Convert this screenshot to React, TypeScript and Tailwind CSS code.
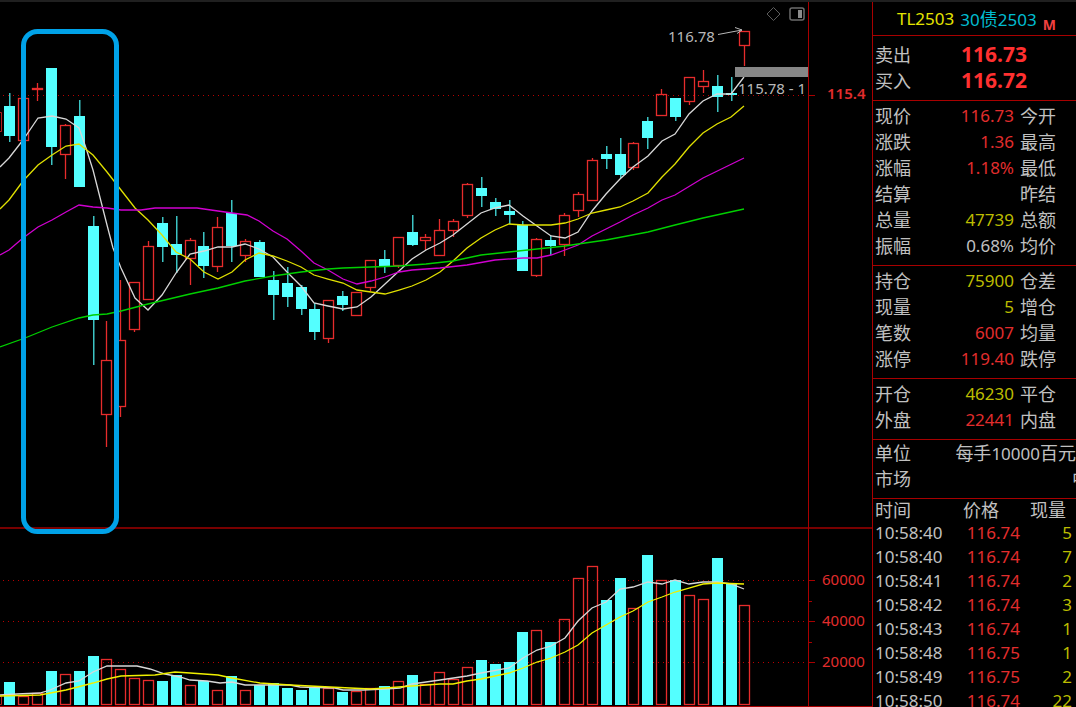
type Candle = [
	kind: "up" | "down",
	high: number,
	top: number,
	bottom: number,
	low: number,
	volume: number
];

type Tone = "red" | "yellow" | "gray";

type Quote = {
	label: string;
	value: string;
	tone: Tone;
	next: string;
};

const FIRST_X = 9.8;
const STEP = 13.87;

// one entry per day, every number is a y coordinate on the canvas
const candles: Candle[] = [
	["down", 93, 106, 136, 142, 682],
	["up", 98, 98, 140, 140, 696],
	["up", 83, 88, 89, 101, 693],
	["down", 68, 68, 147, 165, 671],
	["up", 124, 125, 154, 179, 674],
	["down", 100, 116, 187, 187, 671],
	["down", 216, 226, 320, 365, 656],
	["up", 321, 360, 414, 447, 659],
	["up", 280, 340, 406, 417, 669],
	["up", 282, 282, 329, 332, 678],
	["up", 241, 246, 299, 299, 680],
	["down", 217, 223, 247, 262, 681],
	["down", 216, 244, 255, 273, 675],
	["up", 238, 240, 258, 285, 685],
	["down", 232, 246, 266, 278, 681],
	["up", 217, 227, 266, 272, 690],
	["down", 200, 213, 246, 262, 676],
	["up", 239, 241, 255, 262, 690],
	["down", 240, 242, 277, 277, 685],
	["down", 271, 280, 295, 320, 683],
	["down", 267, 283, 297, 307, 688],
	["down", 285, 287, 309, 315, 690],
	["down", 303, 309, 332, 340, 688],
	["up", 300, 300, 338, 343, 688],
	["down", 291, 296, 305, 311, 692],
	["up", 292, 292, 315, 315, 691],
	["up", 260, 260, 287, 291, 688],
	["down", 250, 259, 267, 273, 686],
	["up", 237, 237, 265, 268, 681],
	["down", 215, 232, 245, 246, 675],
	["up", 234, 237, 240, 250, 684],
	["up", 219, 230, 255, 255, 672],
	["up", 219, 221, 230, 237, 679],
	["up", 183, 184, 215, 218, 667],
	["down", 177, 188, 196, 207, 660],
	["down", 198, 202, 209, 216, 664],
	["down", 200, 211, 215, 224, 662],
	["down", 221, 225, 271, 271, 632],
	["up", 238, 239, 275, 277, 630],
	["down", 236, 240, 246, 255, 642],
	["up", 213, 215, 244, 256, 619],
	["up", 192, 194, 210, 217, 578],
	["up", 158, 160, 200, 200, 566],
	["down", 146, 154, 159, 169, 600],
	["down", 138, 154, 175, 178, 578],
	["up", 142, 143, 167, 170, 608],
	["down", 117, 121, 138, 149, 555],
	["up", 89, 94, 115, 115, 580],
	["down", 98, 98, 117, 121, 580],
	["up", 77, 77, 101, 105, 595],
	["up", 70, 81, 86, 93, 599],
	["down", 75, 86, 97, 112, 558],
	["down", 77, 93, 95, 101, 583],
	["up", 31, 31, 45, 66, 605],
];

const priceLines = [
	{
		color: "#d8d8d8",
		points:
			"0,167 9,158 23,140 38,118 52,116 66,119 79,128 86,148 93,170 107,225 113,248 121,268 135,298 148,310 162,295 176,273 190,254 204,251 218,247 232,247 245,244 259,249 273,257 287,272 301,286 314,303 328,306 343,309 357,307 371,297 385,284 399,271 412,259 426,250 440,243 453,235 467,224 481,213 495,208 509,205 523,216 537,226 551,236 565,238 578,232 592,211 606,194 620,179 633,167 648,156 662,141 675,134 689,114 703,101 717,94 731,94 744,77",
	},
	{
		color: "#e0e000",
		points:
			"0,209 9,200 23,181 38,165 52,155 66,146 79,144 93,155 107,172 121,190 135,208 148,220 162,235 176,252 190,259 204,272 218,279 232,272 245,260 259,253 273,256 287,261 301,267 314,275 328,279 343,283 357,290 371,292 385,294 399,290 412,286 426,280 440,272 453,261 467,248 481,238 495,230 509,224 523,225 551,225 565,223 578,219 592,213 606,210 620,207 633,201 648,193 662,177 675,164 689,147 703,133 717,124 731,117 744,106",
	},
	{
		color: "#d000d0",
		points:
			"0,255 9,250 23,238 38,227 52,220 66,212 79,205 93,207 107,208 121,210 141,210 155,208 197,208 218,211 232,213 247,215 259,221 273,231 287,239 301,251 314,263 328,270 343,279 357,284 371,281 385,277 399,272 412,270 440,268 467,265 495,260 523,258 537,258 551,255 565,250 578,245 592,236 606,229 620,222 633,215 648,208 662,200 675,195 703,178 744,158",
	},
	{
		color: "#00d000",
		points:
			"0,347 25,338 52,327 79,318 93,315 107,314 121,311 148,304 190,294 218,288 245,281 273,276 301,272 328,269 343,268 371,267 399,266 426,264 453,261 481,255 509,252 537,249 565,246 578,244 606,240 648,232 675,225 703,218 744,209",
	},
];

const volumeLines = [
	{
		color: "#d8d8d8",
		points:
			"0,695 17,694 40,693 50,690 66,683 79,681 93,672 107,666 137,666 150,669 165,674 180,677 190,680 207,681 220,683 232,682 245,685 290,685 300,687 335,688 343,690 363,690 385,689 400,688 412,684 440,680 467,676 481,673 509,668 523,658 537,650 551,646 565,638 578,621 592,608 606,602 620,589 633,587 648,582 662,584 675,580 689,584 703,582 717,582 731,584 744,589",
	},
	{
		color: "#f0f000",
		points:
			"0,696 40,695 66,690 93,683 107,679 121,676 155,675 175,672 190,673 218,675 232,678 260,683 290,685 330,687 350,688 371,689 385,688 412,686 440,684 453,684 467,681 481,679 495,676 509,673 523,668 537,662 551,658 565,652 578,645 592,633 606,625 620,617 633,611 648,602 662,597 675,592 689,588 703,584 717,583 744,584",
	},
];

const volumeScale = [
	{ y: 580, label: "60000" },
	{ y: 621, label: "40000" },
	{ y: 662, label: "20000" },
];

const quoteGroups: Quote[][] = [
	[
		{ label: "现价", value: "116.73", tone: "red", next: "今开" },
		{ label: "涨跌", value: "1.36", tone: "red", next: "最高" },
		{ label: "涨幅", value: "1.18%", tone: "red", next: "最低" },
		{ label: "结算", value: "", tone: "gray", next: "昨结" },
		{ label: "总量", value: "47739", tone: "yellow", next: "总额" },
		{ label: "振幅", value: "0.68%", tone: "gray", next: "均价" },
	],
	[
		{ label: "持仓", value: "75900", tone: "yellow", next: "仓差" },
		{ label: "现量", value: "5", tone: "yellow", next: "增仓" },
		{ label: "笔数", value: "6007", tone: "red", next: "均量" },
		{ label: "涨停", value: "119.40", tone: "red", next: "跌停" },
	],
	[
		{ label: "开仓", value: "46230", tone: "yellow", next: "平仓" },
		{ label: "外盘", value: "22441", tone: "red", next: "内盘" },
	],
];

const ticks = [
	{ time: "10:58:40", price: "116.74", volume: 5 },
	{ time: "10:58:40", price: "116.74", volume: 7 },
	{ time: "10:58:41", price: "116.74", volume: 2 },
	{ time: "10:58:42", price: "116.74", volume: 3 },
	{ time: "10:58:43", price: "116.74", volume: 1 },
	{ time: "10:58:48", price: "116.75", volume: 1 },
	{ time: "10:58:49", price: "116.75", volume: 2 },
	{ time: "10:58:50", price: "116.74", volume: 22 },
];

const tones = {
	red: "text-[#e22d2d]",
	yellow: "text-[#bcbc00]",
	gray: "text-[#c0c0c0]",
};

const CandleShape = ({ x, candle }: { x: number; candle: Candle }) => {
	const [kind, high, top, bottom, low, volume] = candle;

	if (kind === "down") {
		return (
			<g fill="#54ffff">
				<rect x={x} y={high} width="1.5" height={low - high} fill="#3cc4c4" />
				<rect x={x - 5} y={top} width="11" height={bottom - top} />
				<rect x={x - 5} y={volume} width="11" height={705 - volume} />
			</g>
		);
	}

	return (
		<g fill="none" stroke="#e62c2c" strokeWidth="1.3">
			<path
				d={`M${x + 0.5} ${high}V${top}M${x + 0.5} ${bottom}V${low}`}
			/>
			<rect
				x={x - 4.5}
				y={top + 0.5}
				width="10"
				height={Math.max(bottom - top, 1)}
			/>
			<rect x={x - 4.5} y={volume + 0.5} width="10" height={704 - volume} />
		</g>
	);
};

const Chart = () => (
	<svg
		viewBox="0 2 872 705"
		className="block h-auto w-full"
		role="img"
		aria-label="TL2503"
	>
		{/* grid */}
		<g stroke="#b80000" strokeDasharray="1 4">
			<path d="M3 95.5H807" />
			{volumeScale.map(({ y }) => (
				<path key={y} d={`M3 ${y + 0.5}H807`} />
			))}
		</g>

		{/* day cut by the left edge */}
		<path d="M0 112.5H1.5V131.5H0M0 696.5H1.5V704.5H0" fill="none" stroke="#b02020" />

		{candles.map((candle, index) => (
			<CandleShape
				key={index}
				x={Math.floor(FIRST_X + index * STEP)}
				candle={candle}
			/>
		))}

		<g fill="none" strokeWidth="1.3">
			{[...priceLines, ...volumeLines].map(({ color, points }) => (
				<polyline key={points} points={points} stroke={color} />
			))}
		</g>

		{/* frames and scale marks */}
		<g fill="#a80000">
			<rect x="0" y="527" width="872" height="2" fill="#780000" />
			<rect x="0" y="706" width="872" height="1" />
			<rect x="808" y="2" width="1" height="705" />
			<rect x="809" y="95" width="6" height="1" />
			{volumeScale.map(({ y }) => (
				<rect key={y} x="809" y={y} width="6" height="1" />
			))}
			<rect x="809" y="601" width="3" height="1" />
			<rect x="809" y="642" width="3" height="1" />
		</g>

		<g fontSize="15" fill="#e22d2d">
			<text x="827" y="99" fontWeight="600">
				115.4
			</text>
			{volumeScale.map(({ y, label }) => (
				<text key={y} x="822" y={y + 5}>
					{label}
				</text>
			))}
		</g>

		<rect x="735" y="67" width="73" height="10" fill="#868686" />
		<g fontSize="15" fill="#b8b8b8">
			<text x="668" y="42">
				116.78
			</text>
			<text x="738" y="94">
				115.78 - 1
			</text>
		</g>
		<path
			d="M718 34.5L742 30M735 27.5L742 30L737 33.5"
			fill="none"
			stroke="#b8b8b8"
		/>

		<rect
			x="23.5"
			y="31.5"
			width="93"
			height="500"
			rx="14"
			fill="none"
			stroke="#00a2e8"
			strokeWidth="5"
		/>
	</svg>
);

const ChartTools = () => (
	<div className="absolute top-1 right-[67px] flex gap-2">
		<button type="button" aria-label="标记">
			<svg width="16" height="16" fill="none" stroke="#5c5c5c">
				<path d="M8.5 1.5L15 8L8.5 14.5L2 8Z" />
			</svg>
		</button>
		<button type="button" aria-label="侧栏">
			<svg width="16" height="16" fill="none">
				<rect
					x="1"
					y="2"
					width="14"
					height="12"
					rx="2"
					stroke="#6c6c6c"
					strokeWidth="1.5"
				/>
				<rect x="9" y="4" width="4" height="8" fill="#8c8c8c" />
			</svg>
		</button>
	</div>
);

const QuoteRow = ({ label, value, tone, next }: Quote) => (
	<div className="flex h-[26px] items-center whitespace-nowrap">
		<dt className="w-[39px] text-lg">{label}</dt>
		<dd className={`w-[100px] text-right ${tones[tone]}`}>{value}</dd>
		<dt className="ml-1.5 text-lg">{next}</dt>
	</div>
);

const BigQuote = ({ label, value }: { label: string; value: string }) => (
	<div className="flex h-[26px] items-center">
		<dt className="w-[86px] text-lg">{label}</dt>
		<dd className="pb-0.5 text-[21px] leading-6 font-bold text-[#ff3030]">
			{value}
		</dd>
	</div>
);

const QuotePanel = () => (
	<aside className="w-[204px] shrink-0 overflow-hidden border-l border-[#a80000] text-[17px] leading-6 text-[#c0c0c0]">
		<h1 className="flex h-[33px] items-center gap-1.5 pl-6 whitespace-nowrap">
			<span className="text-[#e4e400]">TL2503</span>
			<span className="text-[#00bcd0]">
				30<span className="text-lg">债</span>2503
			</span>
			<span className="mt-3 text-sm font-bold text-[#f04040]">M</span>
		</h1>

		<dl className="border-t border-[#a80000] pt-1.5 pb-1.5 pl-0.5">
			<BigQuote label="卖出" value="116.73" />
			<BigQuote label="买入" value="116.72" />
		</dl>

		{quoteGroups.map((group) => (
			<dl
				key={group[0].label}
				className="border-t border-[#a80000] pt-0.5 pb-1.5 pl-0.5 last-of-type:pb-1"
			>
				{group.map((quote) => (
					<QuoteRow key={quote.label} {...quote} />
				))}
			</dl>
		))}

		<dl className="border-t border-[#a80000] pb-1.5 pl-0.5">
			<div className="flex h-[26px] items-center whitespace-nowrap">
				<dt className="w-[81px] text-lg">单位</dt>
				<dd>
					<span className="text-lg">每手</span>10000
					<span className="text-lg">百元</span>
				</dd>
			</div>
			<div className="flex h-[26px] items-center whitespace-nowrap">
				<dt className="w-[197px] shrink-0 text-lg">市场</dt>
				<dd className="text-lg">中</dd>
			</div>
		</dl>

		<div className="border-t border-[#a80000] pl-0.5">
			<table className="w-[197px] table-fixed whitespace-nowrap">
				<thead>
					<tr className="h-[22px] text-lg leading-[22px]">
						<th className="w-[72px] text-left font-normal">时间</th>
						<th className="w-[73px] pl-4 text-left font-normal">价格</th>
						<th className="pl-2.5 text-left font-normal">现量</th>
					</tr>
				</thead>
				<tbody>
					{ticks.map(({ time, price, volume }, index) => (
						<tr key={index} className="h-6">
							<td>{time}</td>
							<td className="text-right text-[#e22d2d]">{price}</td>
							<td className="text-right text-[#bcbc00]">{volume}</td>
						</tr>
					))}
				</tbody>
			</table>
		</div>
	</aside>
);

export default function App() {
	return (
		<div className="flex h-screen flex-col overflow-hidden bg-black font-['Noto_Sans','Noto_Sans_CJK_SC',sans-serif]">
			<div className="h-0.5 shrink-0 bg-[#202020]" />
			<div className="flex min-h-0 flex-1">
				<main className="relative min-w-0 flex-1">
					<Chart />
					<ChartTools />
				</main>
				<QuotePanel />
			</div>
		</div>
	);
}
